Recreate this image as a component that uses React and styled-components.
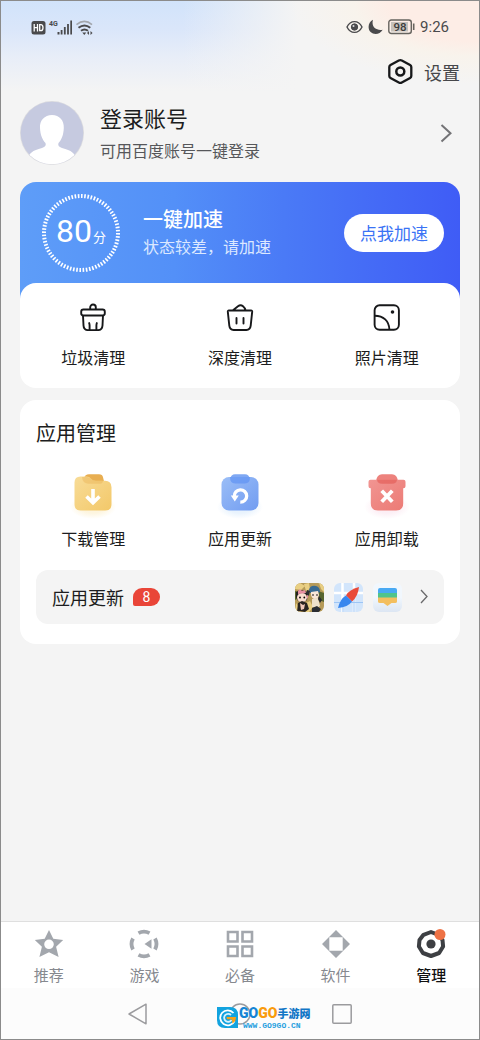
import React from "react";
import styled, { createGlobalStyle } from "styled-components";

const GlobalStyle = createGlobalStyle`
  *, *::before, *::after { box-sizing: border-box; }
  body {
    margin: 0;
    font-family: Roboto, "Noto Sans CJK SC", sans-serif;
    color: #1c1d20;
  }
  h1, h2, p { margin: 0; font-weight: 400; }
  button {
    margin: 0;
    padding: 0;
    border: 0;
    background: none;
    font: inherit;
    color: inherit;
    text-align: left;
    cursor: pointer;
  }
  svg { display: block; flex: none; }
`;

const Screen = styled.div`
  display: flex;
  flex-direction: column;
  min-height: 100vh;
  border: 1px solid #8b8b8b;
  background:
    radial-gradient(ellipse 190px 84px at 100% 0, #fdede6 48%, #f8f3ec 66%, rgba(244, 244, 244, 0) 100%) no-repeat,
    linear-gradient(90deg, rgba(244, 244, 244, 0) 38%, #f4f4f4 62%) no-repeat 0 0 / 100% 96px,
    linear-gradient(180deg, #d1e3fb 0, #dae6fa 28px, #e7edf8 54px, #f4f4f4 90px) no-repeat,
    #f4f4f4;
`;

const StatusBar = styled.div`
  display: flex;
  align-items: center;
  justify-content: space-between;
  height: 52px;
  padding: 0 30px;
`;

const StatusGroup = styled.div`
  display: flex;
  align-items: center;
  gap: ${(p) => p.$gap}px;
  font-size: 15px;
  color: #4a4a4c;
`;

const Toolbar = styled.div`
  display: flex;
  justify-content: flex-end;
  height: 38px;
  padding: 0 19px;
`;

const SettingsButton = styled.button`
  display: flex;
  align-items: center;
  gap: 9px;
  font-size: 18px;
  color: #46474a;
`;

const Main = styled.main`
  flex: 1;
  display: flex;
  flex-direction: column;
  padding: 10px 19px 20px;
`;

const Profile = styled.button`
  display: flex;
  align-items: center;
  gap: 16px;
  padding-right: 4px;
`;

const ProfileText = styled.span`
  flex: 1;
  display: flex;
  flex-direction: column;
  gap: 4px;
  padding-top: 2px;
`;

const ProfileName = styled.span`
  font-size: 22px;
  line-height: 32px;
`;

const ProfileHint = styled.span`
  font-size: 16px;
  line-height: 24px;
  color: #56575a;
`;

const Boost = styled.section`
  display: flex;
  align-items: center;
  margin-top: 17px;
  padding: 10px 16px 26px 21px;
  min-height: 117px;
  border-radius: 16px 16px 0 0;
  background: linear-gradient(90deg, #5e9df8 0, #5390f8 35%, #4a7af6 60%, #3f5cf6 100%);
  color: #fff;
`;

const Score = styled.div`
  display: grid;
  place-items: center;
  width: 80px;
  height: 80px;

  > * { grid-area: 1 / 1; }
`;

const ScoreValue = styled.span`
  padding-top: 4px;
  font-size: 32px;
  line-height: 40px;
`;

const ScoreUnit = styled.small`
  margin-left: 1px;
  font-size: 13px;
`;

const BoostText = styled.div`
  flex: 1;
  margin-left: 22px;
`;

const BoostTitle = styled.h1`
  font-size: 20px;
  line-height: 28px;
  font-weight: 500;
`;

const BoostHint = styled.p`
  margin-top: 2px;
  font-size: 16px;
  line-height: 24px;
  color: #dce8ff;
`;

const BoostButton = styled.button`
  height: 38px;
  padding: 0 16px 1px;
  border-radius: 19px;
  background: #fff;
  font-size: 17px;
  color: #3a73f5;
`;

const Card = styled.section`
  margin-top: ${(p) => p.$offset}px;
  padding: 20px 0 ${(p) => p.$bottom}px;
  border-radius: 16px;
  background: #fff;
`;

const CardTitle = styled.h2`
  padding: 0 16px;
  font-size: 20px;
  line-height: 28px;
`;

const ToolGrid = styled.div`
  display: grid;
  grid-template-columns: repeat(3, 1fr);
`;

const Tool = styled.button`
  display: flex;
  flex-direction: column;
  align-items: center;
  gap: ${(p) => p.$gap}px;
  padding-top: ${(p) => p.$top || 0}px;
  font-size: 16px;
  line-height: 22px;
`;

const UpdateRow = styled.button`
  display: flex;
  align-items: center;
  width: calc(100% - 32px);
  height: 54px;
  margin: 19px 16px 0;
  padding: 0 14px 0 16px;
  border-radius: 12px;
  background: #f4f4f4;
  font-size: 18px;
`;

const Badge = styled.span`
  width: 27px;
  height: 18px;
  margin-left: 9px;
  border-radius: 9px 9px 9px 2px;
  background: #e94538;
  font-size: 14px;
  line-height: 18px;
  text-align: center;
  color: #fff;
`;

const Thumbs = styled.span`
  display: flex;
  gap: 10px;
  margin: 0 16px 0 auto;
`;

const TabBar = styled.nav`
  display: grid;
  grid-template-columns: repeat(5, 1fr);
  height: 67px;
  border-top: 1px solid #dfdfdf;
  background: #fff;
`;

const Tab = styled.button`
  display: flex;
  flex-direction: column;
  align-items: center;
  gap: 6px;
  padding-top: 7px;
  font-size: 15px;
  line-height: 22px;
  color: ${(p) => (p.$active ? "#111" : "#86898f")};
  font-weight: ${(p) => (p.$active ? 500 : 400)};
`;

const SystemNav = styled.div`
  position: relative;
  display: flex;
  align-items: center;
  justify-content: center;
  gap: 80px;
  height: 51px;
  background: #fcfcfc;
`;

const Watermark = styled.div`
  position: absolute;
  top: 17px;
  left: 50%;
  display: flex;
  align-items: center;
  gap: 1px;
  margin-left: -23px;
  white-space: nowrap;
`;

const WatermarkName = styled.div`
  display: flex;
  align-items: center;
  height: 17px;
  font: 900 14px/17px Roboto, sans-serif;
  color: #1585d5;
`;

const WatermarkCjk = styled.span`
  font: 900 11px/17px "Noto Sans CJK SC", sans-serif;
  color: #1276c6;
`;

const WatermarkOrange = styled.span`
  color: #f99b0c;
`;

const WatermarkUrl = styled.div`
  height: 8px;
  padding-left: 4px;
  font: 700 8px/8px "Liberation Mono", monospace;
  color: #28a0df;
`;

function Chevron({ size, color, width }) {
  return (
    <svg width={size} height="20" viewBox={`0 0 ${size} 20`} fill="none" stroke={color} strokeWidth={width}>
      <path d={size === 20 ? "M5.5 2l9 8.300-9 8.300" : "M3 3l6 6.500-6 6.500"} />
    </svg>
  );
}

function SignalIcons() {
  return (
    <svg width="64" height="20" viewBox="0 0 64 20" fill="#4a4a4c">
      <rect x="0.500" y="4" width="14" height="13.500" rx="2.500" />
      <path d="M3.200 7v7.500M3.200 10.700h3.300M6.500 7v7.500M8.700 7.700v6h1.100c1.600 0 2.200-1 2.200-3s-.6-3-2.200-3z" fill="none" stroke="#fff" strokeWidth="1.300" />
      <text x="18" y="9" fontSize="7" fontWeight="700" fontFamily="Roboto, sans-serif">4G</text>
      <path d="M26.500 15h2v2.500h-2zM29.700 13h1.800v4.500h-1.800zM32.900 10h1.800v7.500h-1.800zM36.100 7h1.800v10.500h-1.800zM39.300 3.500h1.700v14h-1.700z" />
      <path d="M45.500 7.700q8-6.500 15.500 0" fill="none" stroke="#a3a7ae" strokeWidth="1.600" />
      <path d="M47.500 10.800q6-4.800 11.800 0M50 13.800q3.500-2.700 7 0" fill="none" stroke="#4a4a4c" strokeWidth="1.900" />
      <path d="M51.300 15.600h4l-2 2.400zM56 16l2-2v4zM61.500 16l-2-2v4z" />
    </svg>
  );
}

function EyeIcon() {
  return (
    <svg width="17" height="16" viewBox="0 0 17 16" fill="none" stroke="#4a4a4c">
      <path d="M1 8c3.500-7.200 11.500-7.200 15 0-3.500 7.200-11.500 7.200-15 0z" strokeWidth="1.400" />
      <circle cx="8.500" cy="8" r="3.200" fill="#4a4a4c" />
      <circle cx="7.500" cy="6.900" r="1" fill="#ddd" stroke="none" />
    </svg>
  );
}

function MoonIcon() {
  return (
    <svg width="15" height="16" viewBox="0 0 15 16" fill="#4a4a4c">
      <path d="M5 .8C3 8 8 11.800 14.700 10.700 12 15.500 6 16.200 2.600 13-.8 9.500.2 3.300 5 .8z" />
    </svg>
  );
}

function BatteryIcon() {
  return (
    <svg width="27" height="16" viewBox="0 0 27 16">
      <rect x=".8" y="1" width="22.500" height="13.500" rx="2.500" fill="none" stroke="#66645f" strokeWidth="1.400" />
      <rect x="3" y="3" width="17" height="9.500" fill="#c6c1bb" />
      <text x="12" y="12" fontSize="11.500" fontWeight="500" textAnchor="middle" fill="#3c3c3c" fontFamily="Roboto, sans-serif">98</text>
      <path d="M25.700 4.500v6.500" stroke="#66645f" strokeWidth="1.600" />
    </svg>
  );
}

function SettingsIcon() {
  return (
    <svg width="28" height="28" viewBox="0 0 28 28" fill="none" stroke="#17181a" strokeLinejoin="round">
      <path d="M11.800 2.500q1.500-.8 3 0l8.300 4.600q1.200.7 1.200 2v8.800q0 1.300-1.200 2l-8.300 4.600q-1.500.8-3 0L3.500 19.900q-1.200-.7-1.200-2V9.100q0-1.300 1.200-2z" strokeWidth="2.300" />
      <circle cx="13.300" cy="13.500" r="4" strokeWidth="2.500" />
    </svg>
  );
}

function Avatar() {
  return (
    <svg width="64" height="64" viewBox="0 0 64 64">
      <defs>
        <clipPath id="avatar-clip"><circle cx="32" cy="32" r="31.300" /></clipPath>
      </defs>
      <circle cx="32" cy="32" r="32" fill="#dcdcdf" />
      <g clipPath="url(#avatar-clip)">
        <path d="M0 0h64v64H0z" fill="#c6cae0" />
        <path d="M32 14c-7.500 0-12.500 5.500-12 13 .3 7 2.300 11.500 5.500 15 .8 2-.2 4-3.500 5-7 1.800-11 3.500-14 9v8h48v-8c-3-5.500-7-7.200-14-9-3.300-1-4.300-3-3.500-5 3.200-3.500 5-8 5.300-15C44.200 19.500 39.500 14 32 14z" fill="#fff" />
      </g>
    </svg>
  );
}

function ScoreRing() {
  return (
    <svg width="80" height="80" viewBox="0 0 80 80">
      <circle cx="40" cy="40" r="37" fill="none" stroke="#fff" strokeWidth="4" pathLength="144" strokeDasharray="1 1" />
    </svg>
  );
}

function BroomIcon() {
  return (
    <svg width="28" height="28" viewBox="0 0 28 28" fill="none" stroke="#17181a" strokeWidth="1.900" strokeLinejoin="round">
      <path d="M11.200 6.500V4.300a2.800 2.800 0 0 1 5.600 0v2.200" />
      <rect x="2.200" y="6.500" width="23.600" height="6" rx="2.200" />
      <path d="M4 12.500l.5 10q.3 4.600 4.500 4.600h10q4.200 0 4.500-4.600l.5-10M10.600 27v-4.500q0-1.800-.7-3.200M17.400 27v-4.500q0-1.800.7-3.200" />
    </svg>
  );
}

function BasketIcon() {
  return (
    <svg width="28" height="28" viewBox="0 0 28 28" fill="none" stroke="#17181a" strokeWidth="1.900" strokeLinejoin="round" strokeLinecap="round">
      <path d="M2.900 7.500h22.200q1.200 0 1.100 1.200l-1.500 14q-.5 4.300-4.300 4.300H7.600q-3.800 0-4.300-4.300l-1.500-14q-.1-1.200 1.100-1.200zM7 7.300l5-4q2.600-2 5 0 2 1.700 2.500 4M10.500 15v5.500M17.500 15v5.500" />
    </svg>
  );
}

function PhotoIcon() {
  return (
    <svg width="28" height="28" viewBox="0 0 28 28" fill="none" stroke="#17181a" strokeWidth="1.900">
      <rect x="1.600" y="2.300" width="24.300" height="24.500" rx="5" />
      <path d="M1.700 12.700C10.500 12.700 16 18 16.400 26.500" />
      <circle cx="19.500" cy="9" r="1.800" fill="#17181a" stroke="none" />
    </svg>
  );
}

function FolderBase({ id, light, dark, tab, glow, children }) {
  return (
    <svg width="56" height="48" viewBox="0 0 56 48">
      <defs>
        <linearGradient id={id} x1="0" y1="0" x2="1" y2="1">
          <stop offset="0" stopColor={light} />
          <stop offset="1" stopColor={dark} />
        </linearGradient>
        <radialGradient id={`${id}-glow`}>
          <stop offset=".5" stopColor={glow} />
          <stop offset="1" stopColor={glow} stopOpacity="0" />
        </radialGradient>
      </defs>
      <ellipse cx="28" cy="35" rx="23" ry="12" fill={`url(#${id}-glow)`} />
      {children(`url(#${id})`, tab)}
    </svg>
  );
}

function DownloadIcon() {
  return (
    <FolderBase id="download" light="#f8dc97" dark="#f3c869" tab="#e8ae51" glow="#fdf5df">
      {(fill, tab) => (
        <>
          <path d="M19 6q1-3.800 5-3.800h10q3.500 0 4 3l1.500 6H22z" fill={tab} />
          <path d="M15.500 4.500h6q3 0 4.500 2.200 1.500 2 5 2h9q6.500 0 6.500 6.500v17q0 6.300-6.300 6.300H15.800q-6.300 0-6.300-6.300V10.500q0-6 6-6z" fill={fill} />
          <path d="M17 5h4.500q3 0 4.500 2 1.500 1.700 5 1.700h7q0 2.500-3 3H23q-5.500-.7-6-6.700z" fill={tab} opacity=".4" />
          <path d="M28 17v13M21.500 24.500l6.500 6.300 6.500-6.300" fill="none" stroke="#fff" strokeWidth="3.600" />
        </>
      )}
    </FolderBase>
  );
}

function RefreshIcon() {
  return (
    <FolderBase id="refresh" light="#9bbef7" dark="#719cf1" tab="#5f93f4" glow="#e9f3fd">
      {(fill, tab) => (
        <>
          <path d="M18 7q1-4.800 5-4.800h10q4 0 5 4.800z" fill="#7fa8f3" />
          <rect x="9.500" y="5" width="37" height="33.500" rx="7.500" fill={fill} />
          <path d="M18 5h20q0 6.500-5 6.500H23q-5 0-5-6.500z" fill={tab} opacity=".7" />
          <path d="M22.300 24.500a6.200 6.200 0 1 1 6 5.700" fill="none" stroke="#fff" strokeWidth="3.300" />
          <path d="M18.800 23.500h8l-4 6z" fill="#fff" />
        </>
      )}
    </FolderBase>
  );
}

function UninstallIcon() {
  return (
    <FolderBase id="uninstall" light="#f19592" dark="#ec7a74" tab="#e4605a" glow="#fceff5">
      {(fill, tab) => (
        <>
          <path d="M17 9q1-6.800 6-6.800h10q5 0 6 6.800z" fill="#ed827d" />
          <path d="M11.500 7.800h33q2 0 2 2v4.500q0 2-2 2h-.3v15q0 7.200-7.200 7.200H19q-7.200 0-7.200-7.200v-15h-.3q-2 0-2-2V9.800q0-2 2-2z" fill={fill} />
          <path d="M18 7.800h20q-.5 4-5 4H23q-4.500 0-5-4z" fill={tab} opacity=".7" />
          <path d="M22.700 18.700l10.600 11M33.300 18.700l-10.600 11" stroke="#fff" strokeWidth="3.800" />
        </>
      )}
    </FolderBase>
  );
}

function GameThumb() {
  return (
    <svg width="29" height="29" viewBox="0 0 29 29">
      <defs><clipPath id="thumb-clip"><rect width="29" height="29" rx="6" /></clipPath></defs>
      <g clipPath="url(#thumb-clip)">
        <path d="M0 0h29v29H0z" fill="#b69a58" />
        <path d="M0 2l5-2 5 3-4 4-6-1zM9 1l5-1 1 6-4 2zM24 0h5v9l-3-3zM1 20l4 6-1 3H0zM11 20l4-2 3 6-4 5h-5z" fill="#e9cf83" />
        <path d="M23 8l6 2v9l-5-2zM0 8l3 1-1 7-2 1z" fill="#57652f" />
        <path d="M1 9l4-2 5 1 3 3-1 6-3 2-6-1-2-4z" fill="#22201f" />
        <path d="M2 14q1-4 5-4t5 4q0 5-5 5t-5-5z" fill="#f9ddcf" />
        <path d="M3 8l2-2 2 2 3-1 1 3-8 1zM11 13l2-1v4z" fill="#e58ea0" />
        <path d="M3 20l4-2 5 2 2 6-4 3-5-1-3 1z" fill="#292421" />
        <path d="M5 20l3 2 2-1-1 5-3 1z" fill="#f0c8ba" />
        <path d="M14 7q1-5 7-4 4 1 4 6l-3 1h-7z" fill="#386a91" />
        <path d="M16 9l7-1 1 4q-1 4-4 4t-4-4z" fill="#fae7d9" />
        <path d="M17 16l6-1 2 8-3 2-5-1z" fill="#eee1cb" />
        <path d="M17 25l5-2 4 3-2 3h-7zM12 7l3 1-1 5-3-3zM24 13l3 4-2 3-2-4z" fill="#2a2d33" />
        <circle cx="5" cy="14.500" r=".9" /><circle cx="9.300" cy="14.500" r=".9" />
        <circle cx="18" cy="12" r=".8" /><circle cx="22" cy="12" r=".8" />
      </g>
    </svg>
  );
}

function MapThumb() {
  return (
    <svg width="29" height="29" viewBox="0 0 29 29">
      <rect width="29" height="29" rx="6" fill="#d2e5fb" />
      <path d="M8.500 0v29M0 10h29M20 0v29" stroke="#fff" strokeWidth="2.500" />
      <path d="M0 19.500h29M20 14v15M9 19v10" stroke="#9dc5f5" strokeWidth="1" />
      <path d="M25 4Q15 6.500 12 12.500l6 6q6-5 7-14.500z" fill="#e94a39" />
      <path d="M12 12.500Q6 16 4 25q10-1 14-6.500z" fill="#3987ee" />
    </svg>
  );
}

function WalletThumb() {
  return (
    <svg width="29" height="29" viewBox="0 0 29 29">
      <defs>
        <linearGradient id="wallet-bg" x1="0" y1="0" x2="0" y2="1">
          <stop offset=".5" stopColor="#f1f7fd" /><stop offset="1" stopColor="#dce6f3" />
        </linearGradient>
      </defs>
      <rect width="29" height="29" rx="6" fill="url(#wallet-bg)" />
      <path d="M5 14V7q0-2 2-2h15q2 0 2 2v7z" fill="#48a9f3" />
      <path d="M5 10h19v6H5z" fill="#4fc48c" />
      <path d="M5 14.500h19v4q0 1.500-2 1.500h-3.500l-4 3-4-3H7q-2 0-2-1.500z" fill="#f3bf5f" />
    </svg>
  );
}

const tabIcons = {
  star: (
    <path fillRule="evenodd" d="M14 0l4.300 8.800 9.900 1.100-7.100 6.900 2.500 10.200L14 22.200l-9.600 4.800 2.500-10.200L-.2 9.900l9.900-1.100zM14 9.500a4.800 4.800 0 1 0 0 9.600A4.800 4.800 0 0 0 14 9.500z" />
  ),
  game: (
    <>
      <path d="M8.500 3.200q5.500-3 11 0M8.500 24.800q5.500 3 11 0M3 8.500q-3 5.500 0 11M25 8.500q3 5.500 0 11" fill="none" stroke="#a3a7ad" strokeWidth="3.800" />
      <path d="M14.500 14l7-4.700v9.400z" />
    </>
  ),
  grid: (
    <path d="M2 2h9.500v9.500H2zM16.500 2H26v9.500h-9.500zM2 16.500h9.500V26H2zM16.500 16.500H26V26h-9.500z" fill="none" stroke="#a3a7ad" strokeWidth="2.600" />
  ),
  apps: (
    <path fillRule="evenodd" d="M14 0l14 14-14 14L0 14zM7.300 7.300v13.400h13.400V7.300z" />
  ),
  manage: (
    <>
      <path d="M14 2l7.500 2.800 4 5.200.6 6.500-4 6.500L14 26l-8.100-3-4-6.500L2.500 10l4-5.200z" fill="none" stroke="#3d3f43" strokeWidth="4" strokeLinejoin="round" />
      <circle cx="14" cy="14" r="4.600" fill="#3d3f43" />
      <circle cx="23" cy="4.500" r="5.500" fill="#ee7245" />
    </>
  ),
};

const cleanTools = [
  { label: "垃圾清理", Icon: BroomIcon },
  { label: "深度清理", Icon: BasketIcon },
  { label: "照片清理", Icon: PhotoIcon },
];

const appTools = [
  { label: "下载管理", Icon: DownloadIcon },
  { label: "应用更新", Icon: RefreshIcon },
  { label: "应用卸载", Icon: UninstallIcon },
];

const tabs = [
  { label: "推荐", icon: "star" },
  { label: "游戏", icon: "game" },
  { label: "必备", icon: "grid" },
  { label: "软件", icon: "apps" },
  { label: "管理", icon: "manage", active: true },
];

export default function App() {
  return (
    <Screen>
      <GlobalStyle />
      <StatusBar>
        <StatusGroup $gap={4}><SignalIcons /></StatusGroup>
        <StatusGroup $gap={5}>
          <EyeIcon />
          <MoonIcon />
          <BatteryIcon />
          <span>9:26</span>
        </StatusGroup>
      </StatusBar>
      <Toolbar>
        <SettingsButton><SettingsIcon />设置</SettingsButton>
      </Toolbar>
      <Main>
        <Profile>
          <Avatar />
          <ProfileText>
            <ProfileName>登录账号</ProfileName>
            <ProfileHint>可用百度账号一键登录</ProfileHint>
          </ProfileText>
          <Chevron size={20} color="#737376" width={2} />
        </Profile>

        <Boost>
          <Score>
            <ScoreRing />
            <ScoreValue>80<ScoreUnit>分</ScoreUnit></ScoreValue>
          </Score>
          <BoostText>
            <BoostTitle>一键加速</BoostTitle>
            <BoostHint>状态较差，请加速</BoostHint>
          </BoostText>
          <BoostButton>点我加速</BoostButton>
        </Boost>
        <Card $offset={-16} $bottom={18}>
          <ToolGrid>
            {cleanTools.map(({ label, Icon }) => (
              <Tool key={label} $gap={17}><Icon />{label}</Tool>
            ))}
          </ToolGrid>
        </Card>

        <Card $offset={12} $bottom={20}>
          <CardTitle>应用管理</CardTitle>
          <ToolGrid>
            {appTools.map(({ label, Icon }) => (
              <Tool key={label} $gap={9} $top={24}><Icon />{label}</Tool>
            ))}
          </ToolGrid>
          <UpdateRow>
            应用更新
            <Badge>8</Badge>
            <Thumbs><GameThumb /><MapThumb /><WalletThumb /></Thumbs>
            <Chevron size={12} color="#69696b" width={1.3} />
          </UpdateRow>
        </Card>
      </Main>

      <TabBar>
        {tabs.map(({ label, icon, active }) => (
          <Tab key={label} $active={active}>
            <svg width="30" height="30" viewBox="-1 -1 30 30" fill="#a3a7ad">{tabIcons[icon]}</svg>
            {label}
          </Tab>
        ))}
      </TabBar>
      <SystemNav>
        <button aria-label="返回">
          <svg width="22" height="22" viewBox="0 0 22 22" fill="none" stroke="#9b9b9e" strokeWidth="1.500" strokeLinejoin="round">
            <path d="M2 11L19 1.200v19.600z" />
          </svg>
        </button>
        <button aria-label="主页">
          <svg width="22" height="22" viewBox="0 0 22 22" fill="none" stroke="#9b9b9e" strokeWidth="1.500"><circle cx="11" cy="11" r="10" /></svg>
        </button>
        <button aria-label="最近任务">
          <svg width="22" height="22" viewBox="0 0 22 22" fill="none" stroke="#9b9b9e" strokeWidth="1.500"><rect x="1.800" y="1.800" width="18.400" height="18.400" rx="1" /></svg>
        </button>
        <Watermark>
          <svg width="21" height="21" viewBox="0 0 21 21">
            <path d="M0 0h13q8 0 8 8v13H8q-8 0-8-8z" fill="#12a3df" />
            <path d="M16.500 6A7.500 7.500 0 1 0 17.500 14" fill="none" stroke="#fff" strokeWidth="1.800" />
            <path d="M14 8a4 4 0 1 0 .5 5" fill="none" stroke="#d9f2fd" strokeWidth="1.800" />
            <path d="M9.500 10H19q0 5-4 6.500 1-3-1-4.300h-4z" fill="#f7a11a" />
          </svg>
          <div>
            <WatermarkName>GO<WatermarkOrange>GO</WatermarkOrange><WatermarkCjk>手游网</WatermarkCjk></WatermarkName>
            <WatermarkUrl>WWW.GO9GO.CN</WatermarkUrl>
          </div>
        </Watermark>
      </SystemNav>
    </Screen>
  );
}
